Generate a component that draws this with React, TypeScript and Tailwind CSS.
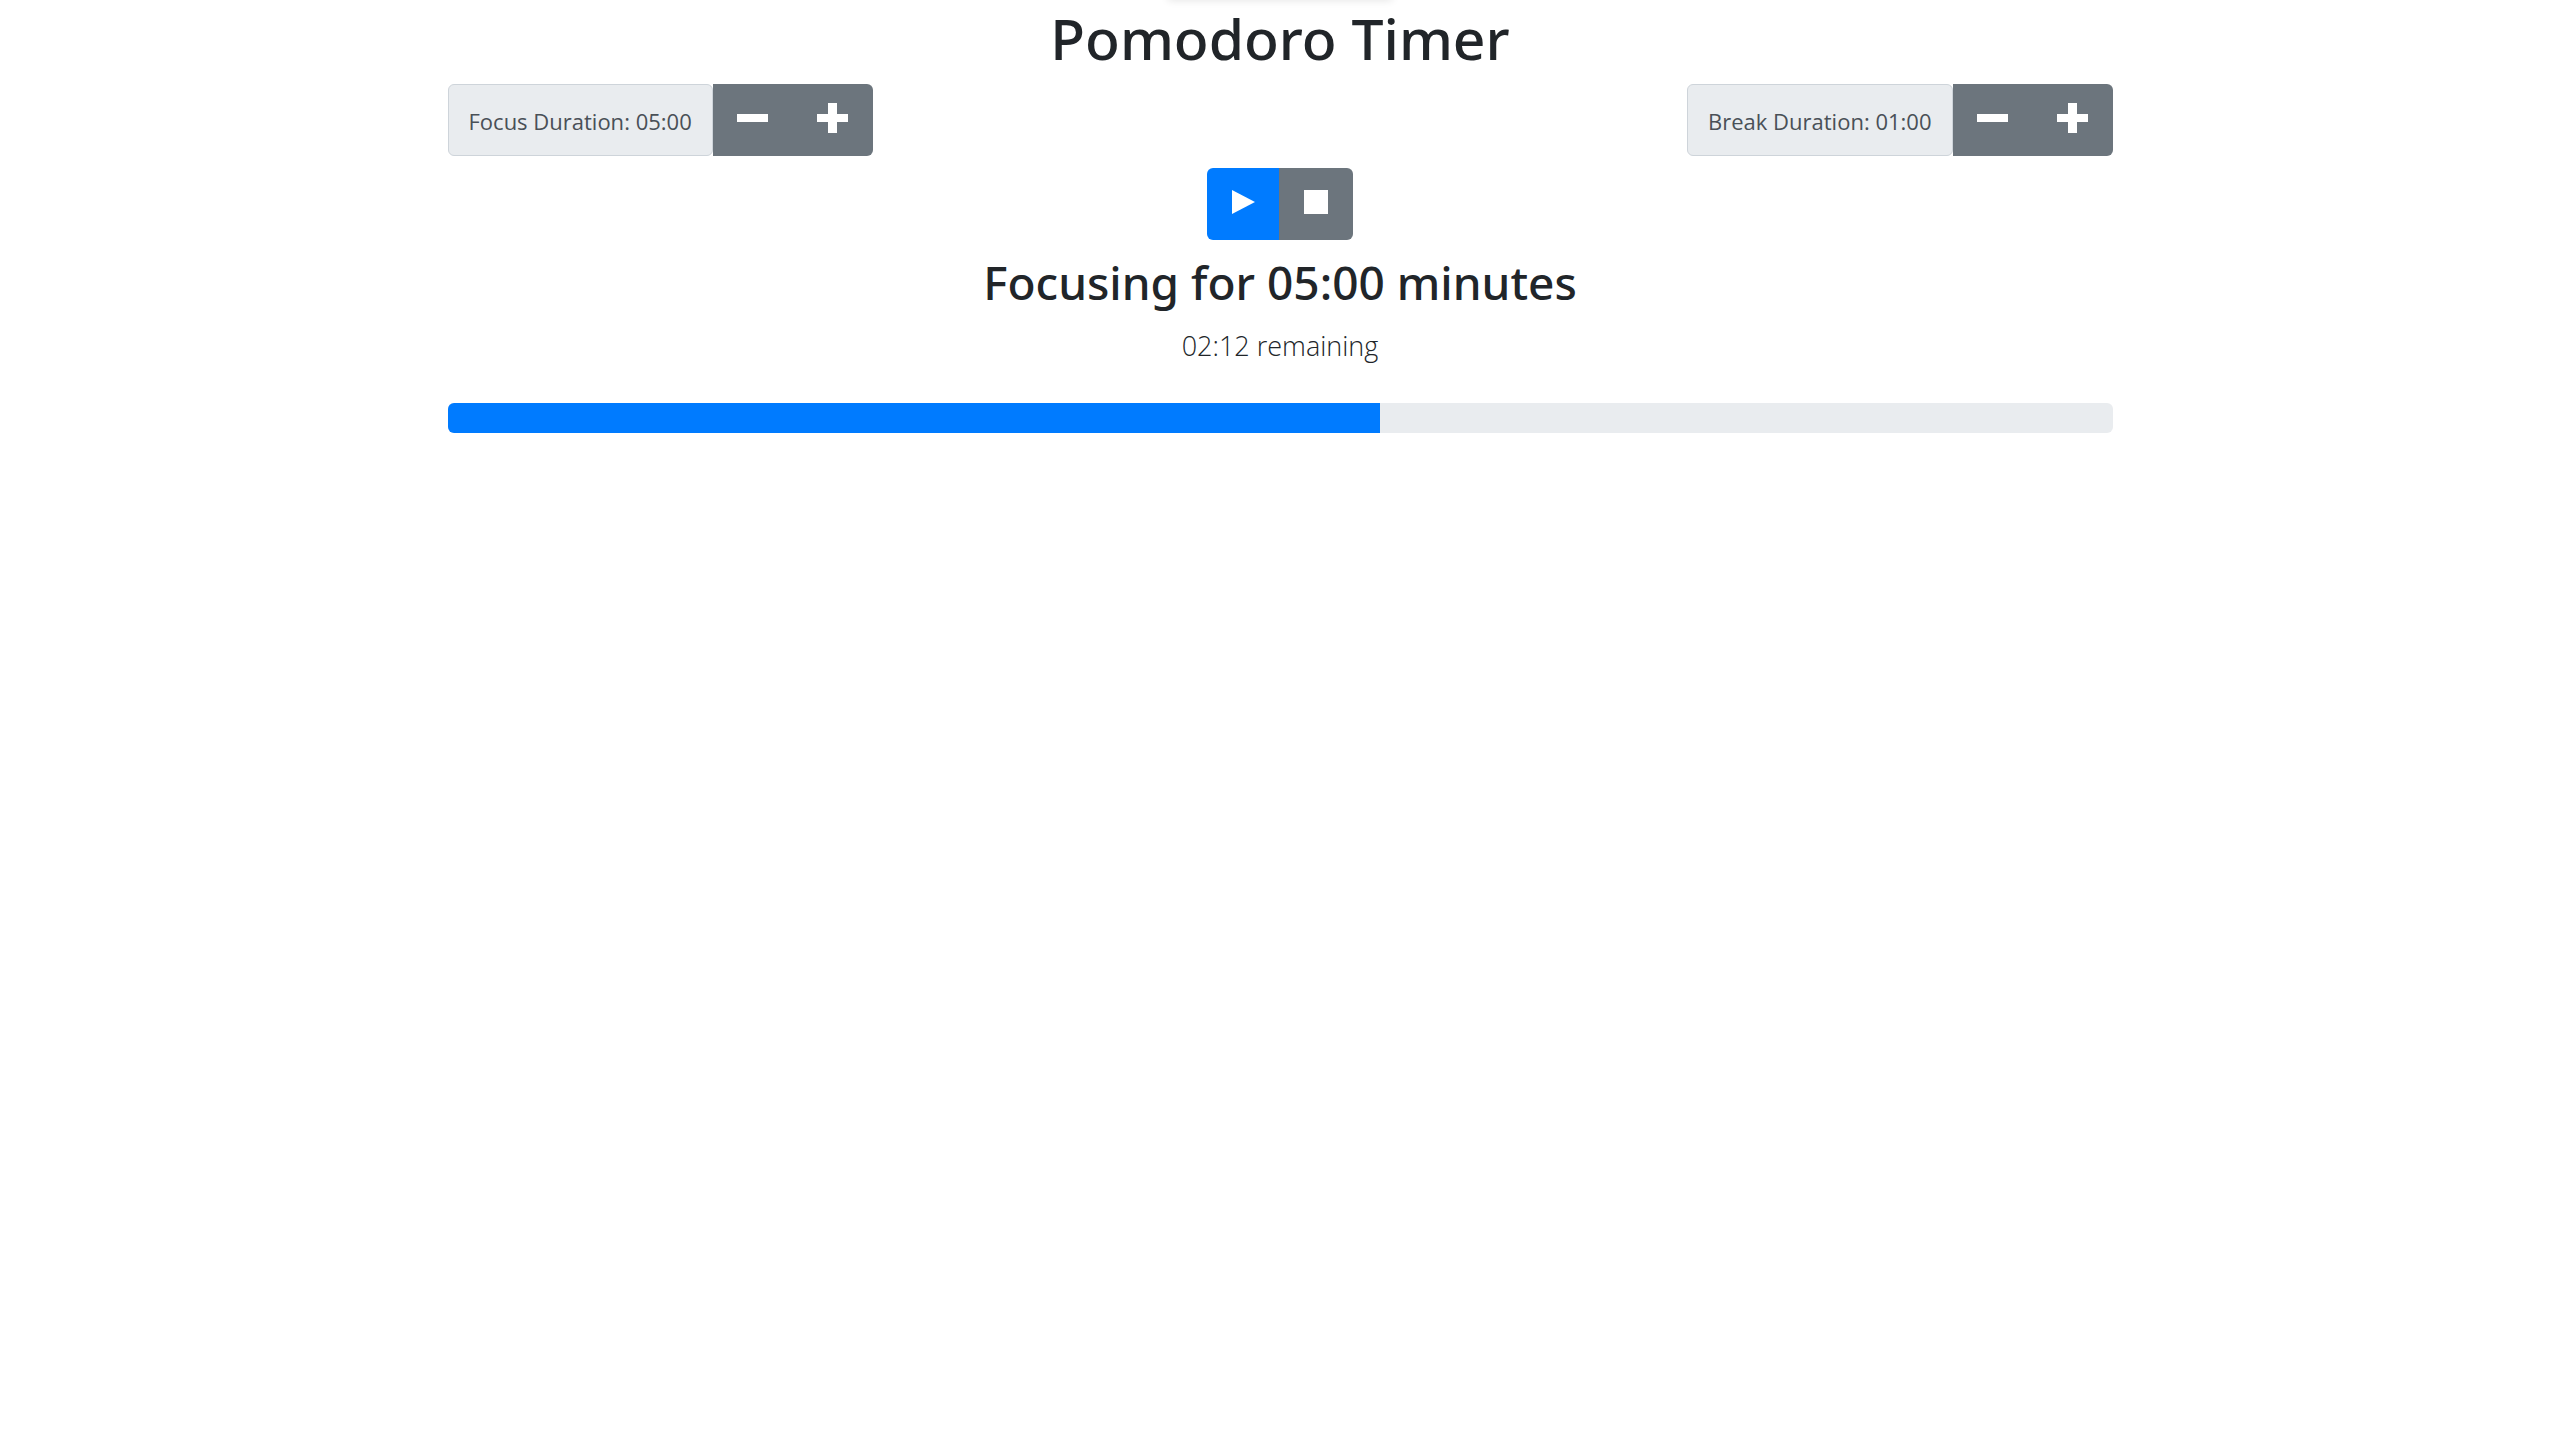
import { useState } from "react";

function format(seconds: number) {
  const m = String(Math.floor(seconds / 60)).padStart(2, "0");
  const s = String(seconds % 60).padStart(2, "0");
  return `${m}:${s}`;
}

type DurationProps = {
  label: string;
  seconds: number;
  step: number;
  onChange: (seconds: number) => void;
};

function Duration({ label, seconds, step, onChange }: DurationProps) {
  return (
    <div role="group" aria-label={label} className="flex h-[72px]">
      <span className="flex items-center rounded-md border border-[#ced4da] bg-[#e9ecef] px-5 pt-0.5 text-[22px] leading-9 whitespace-nowrap text-[#495057]">
        {label}: {format(seconds)}
      </span>
      <div className="flex overflow-hidden rounded-r-md bg-[#6c757d] text-white">
        <button
          type="button"
          aria-label={`Decrease ${label}`}
          className="flex w-20 items-start justify-center pt-[19px]"
          onClick={() => onChange(Math.max(step, seconds - step))}
        >
          <svg width="31" height="30" viewBox="0 0 31 30" fill="currentColor" shapeRendering="crispEdges">
            <path d="M0 11h31v8H0z" />
          </svg>
        </button>
        <button
          type="button"
          aria-label={`Increase ${label}`}
          className="flex w-20 items-start justify-center pt-[19px]"
          onClick={() => onChange(seconds + step)}
        >
          <svg width="31" height="30" viewBox="0 0 31 30" fill="currentColor" shapeRendering="crispEdges">
            <path d="M0 11h11V0h9v11h11v8H20v11h-9V19H0z" />
          </svg>
        </button>
      </div>
    </div>
  );
}

export default function App() {
  const [focus, setFocus] = useState(300);
  const [rest, setRest] = useState(60);
  const percent = 56;

  return (
    <div className="min-h-screen bg-white font-['Open_Sans','Noto_Sans',sans-serif] text-[#212529]">
      <div className="relative">
        <div className="absolute -top-2 left-1/2 h-2 w-56 -translate-x-1/2 shadow-[0_0_8px_rgba(0,0,0,0.12)]" />
      </div>
      <main className="mx-auto w-full max-w-[1665px]">
        <h1 className="pt-0.5 mb-2.5 text-center font-['Noto_Sans','Open_Sans',sans-serif] text-[57px] leading-[72px] font-medium">
          Pomodoro Timer
        </h1>
        <div className="flex flex-wrap justify-between">
          <Duration label="Focus Duration" seconds={focus} step={300} onChange={setFocus} />
          <Duration label="Break Duration" seconds={rest} step={60} onChange={setRest} />
        </div>
        <div className="mt-3 flex justify-center">
          <div role="group" aria-label="Timer controls" className="flex h-[72px] overflow-hidden rounded-md text-white">
            <button type="button" aria-label="Start" className="flex w-[72px] items-start justify-center bg-[#007bff] pt-[22px]">
              <svg width="24" height="24" viewBox="0 0 24 24" fill="currentColor">
                <path d="M1 0l23 12L1 24z" />
              </svg>
            </button>
            <button type="button" aria-label="Stop" className="flex w-[74px] items-start justify-center bg-[#6c757d] pt-[22px]">
              <svg width="24" height="24" viewBox="0 0 24 24" fill="currentColor">
                <path d="M0 0h24v24H0z" />
              </svg>
            </button>
          </div>
        </div>
        <h2 className="mt-3 text-center font-['Noto_Sans','Open_Sans',sans-serif] text-[46px] leading-[60px] font-medium">
          Focusing for {format(focus)} minutes
        </h2>
        <p className="mt-3 text-center text-[27px] leading-[43px] font-light">02:12 remaining</p>
        <div
          role="progressbar"
          aria-label="Session progress"
          aria-valuemin={0}
          aria-valuemax={100}
          aria-valuenow={percent}
          className="mt-9 h-[30px] overflow-hidden rounded-md bg-[#e9ecef]"
        >
          <div className="h-full bg-[#007bff]" style={{ width: `${percent}%` }} />
        </div>
      </main>
    </div>
  );
}
